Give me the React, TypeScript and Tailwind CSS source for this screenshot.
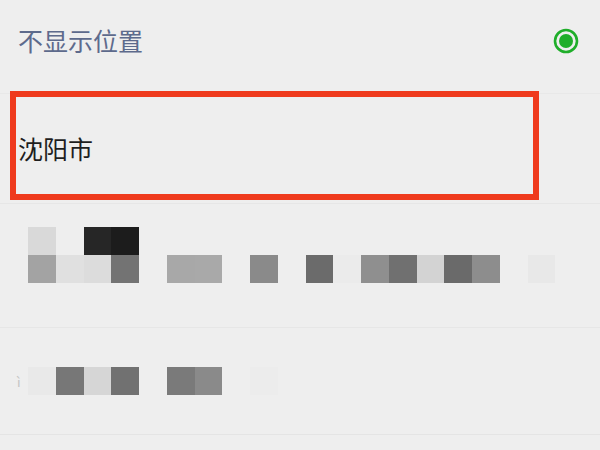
import React from "react";

type Block = { i: number; c: string };

const row3a: Block[] = [
  { i: 0, c: "bg-[#d9d9d9]" },
  { i: 2, c: "bg-[#262626]" },
  { i: 3, c: "bg-[#1c1c1c]" },
];

const row3b: Block[] = [
  { i: 0, c: "bg-[#a3a3a3]" },
  { i: 1, c: "bg-[#e0e0e0]" },
  { i: 2, c: "bg-[#dcdcdc]" },
  { i: 3, c: "bg-[#737373]" },
  { i: 5, c: "bg-[#a8a8a8]" },
  { i: 6, c: "bg-[#a9a9a9]" },
  { i: 8, c: "bg-[#8a8a8a]" },
  { i: 10, c: "bg-[#6b6b6b]" },
  { i: 11, c: "bg-[#ebebeb]" },
  { i: 12, c: "bg-[#8f8f8f]" },
  { i: 13, c: "bg-[#707070]" },
  { i: 14, c: "bg-[#d3d3d3]" },
  { i: 15, c: "bg-[#6a6a6a]" },
  { i: 16, c: "bg-[#8d8d8d]" },
  { i: 18, c: "bg-[#e8e8e8]" },
];

const row4: Block[] = [
  { i: 0, c: "bg-[#e9e9e9]" },
  { i: 1, c: "bg-[#777777]" },
  { i: 2, c: "bg-[#d6d6d6]" },
  { i: 3, c: "bg-[#717171]" },
  { i: 5, c: "bg-[#7a7a7a]" },
  { i: 6, c: "bg-[#8a8a8a]" },
  { i: 8, c: "bg-[#ececec]" },
];

function MosaicRow({ blocks }: { blocks: Block[] }) {
  const cells = Array.from({ length: 19 }, (_, i) => blocks.find((b) => b.i === i));
  return (
    <div className="flex">
      {cells.map((b, i) => (
        <div key={i} className={`h-[28px] w-[27.75px] shrink-0 ${b ? b.c : ""}`} />
      ))}
    </div>
  );
}

export default function App() {
  return (
    <div
      className="relative h-[450px] w-[600px] overflow-hidden bg-[#eeeeee]"
      style={{ fontFamily: '"Noto Sans CJK SC", "Noto Sans", sans-serif' }}
    >
      {/* Row 1 */}
      <div className="flex h-[94px] items-center justify-between border-b border-[#e8e8e8] pb-[12px] pl-[18px] pr-[21px]">
        <span className="text-[25px] leading-none text-[#5d6a8c]">不显示位置</span>
        <svg width="26" height="26" viewBox="0 0 26 26">
          <circle cx="13" cy="13" r="11" fill="none" stroke="#1fae2a" strokeWidth="2.6" />
          <circle cx="13" cy="13" r="7" fill="#1fae2a" />
        </svg>
      </div>

      {/* Row 2 */}
      <div className="flex h-[110px] items-center border-b border-[#e6e6e6] pl-[18px]">
        <span className="text-[25px] leading-none text-[#1e1e1e]">沈阳市</span>
      </div>

      {/* Row 3 */}
      <div className="h-[124px] border-b border-[#e6e6e6] pl-[28px] pt-[23px]">
        <MosaicRow blocks={row3a} />
        <MosaicRow blocks={row3b} />
      </div>

      {/* Row 4 */}
      <div className="flex h-[107px] items-center border-b border-[#e4e4e4]">
        <span className="w-[28px] pl-[17px] text-[13px] leading-none text-[#c4c4c4]">ì</span>
        <MosaicRow blocks={row4} />
      </div>

      {/* Red annotation box */}
      <div className="absolute left-[10px] top-[91px] h-[109px] w-[529px] border-[6px] border-[#ef3a1d]" />
    </div>
  );
}
